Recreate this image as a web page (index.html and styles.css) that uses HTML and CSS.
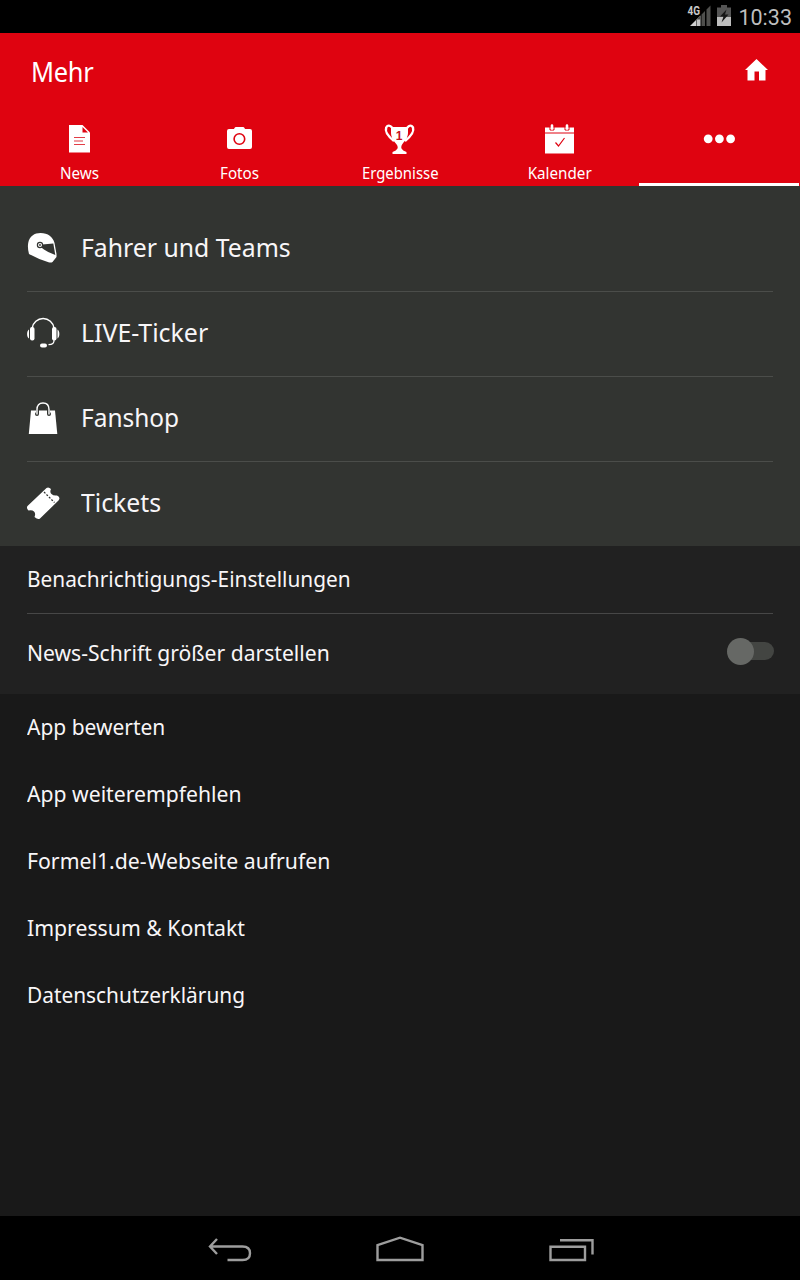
FILE: index.html
```html
<!DOCTYPE html>
<html lang="de">
<head>
<meta charset="utf-8">
<title>Mehr</title>
<link rel="stylesheet" href="styles.css">
</head>
<body>
<div class="screen">
  <div class="status">
    <svg class="signal" width="24" height="24" viewBox="0 0 24 24">
      <path d="M2 21L8 15V21Z" fill="#d0d0d0"/>
      <path d="M8.500 21V14.500L12.500 10.500V21Z" fill="#c4c4c4"/>
      <path d="M8.500 14.500L12.500 10.500V14.500Z" fill="#4f4f4d"/>
      <path d="M13.500 21V9.500L17 6V21ZM18.500 21V4.500L22.500 .500V21Z" fill="#4f4f4d"/>
      <text x="-.5" y="9.800" class="net" textLength="12.500" lengthAdjust="spacingAndGlyphs">4G</text>
    </svg>
    <svg class="battery" width="14" height="21" viewBox="0 0 14 21">
      <path d="M0 2.500H4V0H10V2.500H14V12H0Z" fill="#555"/>
      <path d="M0 12H14V21H0Z" fill="#bebebe"/>
      <path d="M9.500 4.500L3 11.500H6.500L4.500 17.500L11.500 9.500H8Z" fill="#151515"/>
    </svg>
    <span class="clock">10:33</span>
  </div>

  <header class="header">
    <div class="titlebar">
      <h1 class="title">Mehr</h1>
      <svg class="home" width="23" height="22" viewBox="0 0 23 22" fill="#fff"><path d="M11.500 0L23 11H20.500V21.500H14V12.500H9.500V21.500H2.500V11H0Z"/></svg>
    </div>
    <nav class="tabs">
      <a class="tab">
        <svg width="32" height="32" viewBox="0 0 32 32"><path d="M5 2H18.500L26 9.500V29.500H5Z" fill="#fff"/><path d="M18.500 4V9.500H24Z" fill="#df0310"/><path d="M10 14.500H21M10 18H19M10 21.500H21" stroke="#e23d46" stroke-width="1.200"/></svg>
        <span class="tab-label news">News</span>
      </a>
      <a class="tab">
        <svg width="32" height="32" viewBox="0 0 32 32"><path d="M10.500 5Q11 4 12 4H19Q20 4 20.500 5L21 6H26Q28 6 28 8V24Q28 26 26 26H5Q3 26 3 24V8Q3 6 5 6H10Z" fill="#fff"/><circle cx="15.400" cy="16" r="5.300" fill="none" stroke="#df0310" stroke-width="1.600"/></svg>
        <span class="tab-label fotos">Fotos</span>
      </a>
      <a class="tab">
        <svg width="32" height="32" viewBox="0 0 32 32"><path d="M7 4H24V10Q24 15 19.500 19.500Q16.500 23 17.500 25.500Q18.500 27.500 22.500 29V31H8.500V29Q12.500 27.500 13.500 25.500Q14.500 23 11 19.500Q7 15 7 10Z" fill="#fff"/><path d="M8.500 5Q4.500 .500 2.200 4.500C.500 9 5 14 10 18M23 5Q26.500 .500 29 4.500C30.500 9 26 14 21 18" fill="none" stroke="#fff" stroke-width="2.400"/><text x="11.800" y="17" class="cup-number">1</text></svg>
        <span class="tab-label ergebnisse">Ergebnisse</span>
      </a>
      <a class="tab">
        <svg width="32" height="32" viewBox="0 0 32 32"><path d="M1 4.500H30V30.500H1Z" fill="#fff"/><path d="M6 4V7H10V4M21 4V7H25V4M1 10H30" fill="none" stroke="#df0310" stroke-width="1"/><path d="M8 2.500V5.500M23 2.500V5.500" stroke="#fff" stroke-width="2.600" stroke-linecap="round"/><path d="M11.500 19.500L14.500 23L20.500 15" fill="none" stroke="#df0310" stroke-width="1.200"/></svg>
        <span class="tab-label kalender">Kalender</span>
      </a>
      <a class="tab active">
        <svg width="32" height="32" viewBox="0 0 32 32" fill="#fff"><circle cx="5.200" cy="15.800" r="4.400"/><circle cx="16.400" cy="15.800" r="4.400"/><circle cx="27.600" cy="15.800" r="4.400"/></svg>
      </a>
    </nav>
  </header>

  <section class="features">
    <a class="feature">
      <svg width="34" height="34" viewBox="0 0 34 34"><path d="M2 23C.800 19 .700 15 1.200 12C2.500 5 7.500 2 13.500 2C21 2 26 6 27.500 12L29.500 23V26L25.500 31Q24 32 21.500 31.200Q11 28 2 23Z" fill="#fff"/><path d="M15.300 13.500L26.300 12.500L28.300 24Q21 21.500 17 18.500L13 15.500Z" fill="#323431"/><circle cx="13" cy="14" r="2.600" fill="#fff" stroke="#323431" stroke-width="1.200"/><circle cx="13" cy="14" r=".900" fill="#323431"/></svg>
      <span class="label drivers">Fahrer und Teams</span>
    </a>
    <a class="feature">
      <svg width="34" height="34" viewBox="0 0 34 34"><path d="M5.200 12A11 11 0 0 1 27 12" fill="none" stroke="#fff" stroke-width="1.500"/><rect x="3" y="11" width="4.500" height="13.500" rx="2" fill="#fff"/><rect x="25" y="11" width="4.500" height="13.500" rx="2" fill="#fff"/><path d="M2 13.500C-.500 15 -.500 21 2 22.500ZM30.500 13.500C33 15 33 21 30.500 22.500Z" fill="#fff"/><path d="M27 24Q27.500 28.500 21.500 28.700" fill="none" stroke="#fff" stroke-width="1.300"/><rect x="13" y="27.500" width="7" height="4" rx="2" fill="#fff"/></svg>
      <span class="label ticker">LIVE-Ticker</span>
    </a>
    <a class="feature">
      <svg width="34" height="34" viewBox="0 0 34 34"><path d="M4 9.500H28L30.300 33H1.800Z" fill="#fff"/><path d="M10.500 13V9Q10.500 2.200 16 2.200T21.500 9V13" fill="none" stroke="#323431" stroke-width="3"/><circle cx="10" cy="13" r="2" fill="#323431"/><circle cx="22" cy="13" r="2" fill="#323431"/><path d="M10 13.500V8.500Q10 2 16 2T22 8.500V13.500" fill="none" stroke="#fff" stroke-width="1.400"/></svg>
      <span class="label shop">Fanshop</span>
    </a>
    <a class="feature">
      <svg width="34" height="34" viewBox="0 0 34 34"><path d="M.500 20L19.500 2Q21.500 .500 24 3Q22.500 6 24.500 8T30 9.500Q34 11.500 31.500 14.500L13 32.500Q11 34 7.500 31Q9 27.500 7 25.500T1.500 24.500Q-1 22 .500 20Z" fill="#fff"/><path d="M17 6L27.500 16.500" stroke="#323431" stroke-width="1.300" stroke-dasharray="2 1.500"/></svg>
      <span class="label tickets">Tickets</span>
    </a>
  </section>

  <section class="settings">
    <a class="setting"><span class="label notify">Benachrichtigungs-Einstellungen</span></a>
    <label class="setting font-size"><span class="label larger">News-Schrift größer darstellen</span><span class="switch"><span class="knob"></span></span></label>
  </section>

  <section class="links">
    <a class="link"><span class="label rate">App bewerten</span></a>
    <a class="link"><span class="label recommend">App weiterempfehlen</span></a>
    <a class="link"><span class="label website">Formel1.de-Webseite aufrufen</span></a>
    <a class="link"><span class="label imprint">Impressum &amp; Kontakt</span></a>
    <a class="link"><span class="label privacy">Datenschutzerklärung</span></a>
  </section>

  <footer class="navbar">
    <svg width="46" height="30" viewBox="0 0 46 30"><path d="M11 5L4 12.500L11 20M4.500 12.500H36.500Q44 12.500 44 19.200T36.500 26H21.500" fill="none" stroke="#9d9d9d" stroke-width="2.400"/></svg>
    <svg width="50" height="30" viewBox="0 0 50 30"><path d="M2.500 11.200L25 3.700L47.500 11.200V26H2.500Z" fill="none" stroke="#9d9d9d" stroke-width="2.400"/></svg>
    <svg width="46" height="30" viewBox="0 0 46 30"><path d="M2.500 12.700H37V26H2.500ZM12 6.300H44.500V20.500" fill="none" stroke="#9d9d9d" stroke-width="2.400"/></svg>
  </footer>
</div>
</body>
</html>
```
FILE: styles.css
```css
* { box-sizing: border-box; }
body { margin: 0; background: #191919; color: #f8f6f8; font-family: "Noto Sans", sans-serif; }
.screen { width: 800px; height: 1280px; display: flex; flex-direction: column; overflow: hidden; }
svg { display: block; flex: none; overflow: visible; }

.status { height: 33px; flex: none; background: #000; display: flex; justify-content: flex-end; padding: 5px 8px 0 0; }
.signal { margin-right: 5px; }
.battery { margin-right: 7px; }
.net { font: bold 12px Roboto, sans-serif; fill: #c8c8c8; stroke: #000; stroke-width: 1px; paint-order: stroke; }
.clock { font: 21.5px/25px Roboto, sans-serif; color: #bebebe; }

.header { height: 153px; flex: none; background: #df0310; color: #fff; }
.titlebar { height: 84px; display: flex; justify-content: space-between; align-items: center; padding: 0 32px 8px 31px; }
.title { margin: 2px 0 0; font-size: 27px; line-height: 36px; font-weight: 400; letter-spacing: -0.3px; transform: scaleX(0.94); transform-origin: left; }
.home { margin-top: -2px; }
.tabs { height: 69px; display: grid; grid-template-columns: repeat(5, 160px); }
.tab { display: flex; flex-direction: column; align-items: center; padding-top: 6px; }
.tab.active { border-bottom: 3px solid #fff; margin: 0 1px 0 -1px; }
.tab-label { font-size: 16px; line-height: 22px; margin-top: 7px; white-space: nowrap; transform: scaleX(0.95); }
.ergebnisse { transform: scaleX(0.93); }
.cup-number { font: bold 12px "Liberation Sans", sans-serif; fill: #c5101a; }

.features { height: 360px; flex: none; background: #323431; padding: 21px 27px 0; }
.feature { height: 85px; display: flex; align-items: center; gap: 20px; padding-bottom: 2px; border-bottom: 1px solid #4b4d4a; font-size: 26px; line-height: 36px; }
.feature:last-child { border-bottom: 0; height: 84px; }
.feature .label { margin-top: -2px; }

/* Labels use a slightly narrowed face. */
.label { transform: scaleX(0.953); transform-origin: left; white-space: nowrap; }
.ticker { transform: scaleX(0.958); }
.shop { transform: scaleX(0.94); }
.notify { transform: scaleX(0.947); }
.larger { transform: scaleX(0.959); }
.recommend { transform: scaleX(0.962); }
.website, .imprint { transform: scaleX(0.965); }
.privacy { transform: scaleX(0.948); }

.settings { height: 148px; flex: none; background: #212121; padding: 0 27px; font-size: 22px; }
.setting { height: 68px; display: flex; align-items: center; justify-content: space-between; padding-bottom: 3px; border-bottom: 1px solid #474747; line-height: 30px; }
.font-size { height: 80px; border-bottom: 0; padding-bottom: 4px; }
.switch { width: 44px; height: 18px; border-radius: 9px; background: #434542; display: flex; align-items: center; margin: -2px -1px 0 0; }
.knob { width: 27px; height: 27px; flex: none; border-radius: 50%; background: #666865; margin-left: -3px; }

.links { flex: 1; padding: 0 27px; font-size: 22px; }
.link { height: 67px; display: flex; align-items: center; padding-bottom: 3px; line-height: 30px; }

.navbar { height: 64px; flex: none; background: #000; display: flex; justify-content: center; padding-top: 18px; gap: 123px; }
```
